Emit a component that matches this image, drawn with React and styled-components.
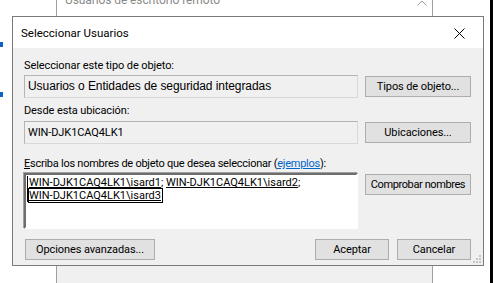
import React from 'react'
import styled, { createGlobalStyle } from 'styled-components'

const ui = `Roboto, "Liberation Sans", Arial, sans-serif`
const classic = `"Liberation Sans", Arial, sans-serif`

const Global = createGlobalStyle`
  html, body {
    margin: 0;
    padding: 0;
    background: #ffffff;
    overflow: hidden;
  }
  body {
    font-family: ${ui};
    font-size: 11px;
    letter-spacing: -0.1px;
    color: #000;
  }
`

const Desktop = styled.div`
  position: relative;
  width: 493px;
  height: 283px;
  background: #ffffff;
  overflow: hidden;
`

const EdgeMark = styled.div`
  position: absolute;
  left: 0;
  top: ${(p) => p.top}px;
  width: 3px;
  height: 5px;
  background: #0a64c8;
`

const BackWindow = styled.div`
  position: absolute;
  left: 56px;
  top: -20px;
  width: 375px;
  height: 320px;
  border-left: 1px solid #a0a0a0;
  border-right: 1px solid #a0a0a0;
  background: linear-gradient(#ffffff 0 40px, #f0f0f0 40px);
`

const BackTitle = styled.div`
  position: absolute;
  left: 8px;
  top: 13px;
  color: #8a8a8a;
  font-size: 12px;
  line-height: 15px;
`

const Chevron = styled.svg`
  position: absolute;
  right: 5px;
  top: 20px;
`

const BlackStrip = styled.div`
  position: absolute;
  right: 0;
  top: 0;
  width: 3px;
  height: 283px;
  background: #000;
`

const Dialog = styled.div`
  position: absolute;
  left: 12px;
  top: 16px;
  width: 470px;
  height: 248px;
  border: 1px solid #7a7a7a;
  background: #f0f0f0;
  display: flex;
  flex-direction: column;
`

const TitleBar = styled.div`
  height: 31px;
  background: #ffffff;
  display: flex;
  align-items: center;
  justify-content: space-between;
  padding: 1px 18px 0 8px;
  box-sizing: border-box;
  flex-shrink: 0;
`

const Title = styled.span`
  font-size: 11.5px;
  letter-spacing: 0;
  line-height: 15px;
`

const Body = styled.div`
  flex: 1;
  position: relative;
  padding: 10px 12px 0 11px;
  display: flex;
  flex-direction: column;
`

const Label = styled.div`
  line-height: 15px;
  height: 15px;
  white-space: nowrap;
  margin-top: ${(p) => p.gap || 0}px;
`

const Row = styled.div`
  display: flex;
  align-items: ${(p) => p.align || 'center'};
  justify-content: space-between;
  margin-top: ${(p) => p.gap || 0}px;
`

const Field = styled.div`
  box-sizing: border-box;
  width: 334px;
  height: 23px;
  border: 1px solid #b4b4b4;
  border-right-color: #d8d8d8;
  border-bottom-color: #d8d8d8;
  padding: 0 3px;
  line-height: 21px;
  white-space: nowrap;
  font-family: ${(p) => (p.classic ? classic : ui)};
  font-size: ${(p) => (p.classic ? '12px' : '11px')};
  letter-spacing: ${(p) => (p.classic ? '-0.07px' : '-0.1px')};
`

const NamesBox = styled.div`
  box-sizing: border-box;
  width: 334px;
  height: 56px;
  background: #ffffff;
  border-style: solid;
  border-width: 2px;
  border-color: #6d6d6d #ffffff #ffffff #6d6d6d;
  box-shadow: -1px -1px 0 #a0a0a0;
  padding: 1px 0 0 1px;
`

const Names = styled.div`
  display: inline-block;
  border-left: 1px solid #000;
  line-height: 13px;
  padding-left: 1px;
  white-space: nowrap;
  letter-spacing: 0;
`

const Name = styled.span`
  text-decoration: underline;
`

const Focused = styled.span`
  text-decoration: underline;
  outline: 1px solid #000;
  padding-right: 1px;
`

const Button = styled.button`
  box-sizing: border-box;
  width: ${(p) => p.w}px;
  height: 21px;
  border: 1px solid #adadad;
  background: #e1e1e1;
  font-family: ${ui};
  font-size: 11px;
  letter-spacing: ${(p) => p.ls || '-0.1px'};
  color: #000;
  padding: 0;
  white-space: nowrap;
  margin-right: ${(p) => p.mr || 0}px;
  margin-top: ${(p) => p.mt || 0}px;
  flex-shrink: 0;
`

const Access = styled.span`
  text-decoration: underline;
`

const Link = styled.span`
  color: #0066cc;
  text-decoration: underline;
`

const Footer = styled.div`
  display: flex;
  align-items: center;
  margin-top: 10px;
  padding-left: 1px;
`

const Spacer = styled.div`
  flex: 1;
`

const Grip = styled.svg`
  position: absolute;
  right: 2px;
  bottom: 2px;
`

function App() {
  return (
    <Desktop>
      <Global />
      <EdgeMark top={42} />
      <EdgeMark top={92} />
      <BackWindow>
        <BackTitle>Usuarios de escritorio remoto</BackTitle>
        <Chevron width="10" height="6" viewBox="0 0 10 6">
          <path d="M0.5 5.5 L5 1 L9.5 5.5" fill="none" stroke="#9a9a9a" strokeWidth="1" />
        </Chevron>
      </BackWindow>
      <BlackStrip />

      <Dialog>
        <TitleBar>
          <Title>Seleccionar Usuarios</Title>
          <svg width="11" height="11" viewBox="0 0 11 11">
            <path d="M0.5 0.5 L10.5 10.5 M10.5 0.5 L0.5 10.5" stroke="#000" strokeWidth="1" />
          </svg>
        </TitleBar>
        <Body>
          <Label>Seleccionar este tipo de objeto:</Label>
          <Row gap={2}>
            <Field classic>Usuarios o Entidades de seguridad integradas</Field>
            <Button w={106}>Tipos de objeto...</Button>
          </Row>
          <Label gap={5}>Desde esta ubicación:</Label>
          <Row gap={3}>
            <Field>WIN-DJK1CAQ4LK1</Field>
            <Button w={106}>Ubicaciones...</Button>
          </Row>
          <Label gap={12} style={{ letterSpacing: '-0.25px' }}>
            <Access>E</Access>scriba los nombres de objeto que desea seleccionar (<Link>ejemplos</Link>):
          </Label>
          <Row gap={2} align="flex-start">
            <NamesBox>
              <Names>
                <Name>WIN-DJK1CAQ4LK1\isard1</Name>; <Name>WIN-DJK1CAQ4LK1\isard2</Name>;
                <br />
                <Focused>WIN-DJK1CAQ4LK1\isard3</Focused>
              </Names>
            </NamesBox>
            <Button w={106} mt={1} ls="-0.4px">Comprobar nombres</Button>
          </Row>
          <Footer>
            <Button w={130}>Opciones avanzadas...</Button>
            <Spacer />
            <Button w={74} mr={8}>Aceptar</Button>
            <Button w={74}>Cancelar</Button>
          </Footer>
          <Grip width="8" height="8" viewBox="0 0 8 8">
            <rect x="6" y="0" width="2" height="2" fill="#c6c6c6" />
            <rect x="3" y="3" width="2" height="2" fill="#c6c6c6" />
            <rect x="6" y="3" width="2" height="2" fill="#c6c6c6" />
            <rect x="0" y="6" width="2" height="2" fill="#c6c6c6" />
            <rect x="3" y="6" width="2" height="2" fill="#c6c6c6" />
            <rect x="6" y="6" width="2" height="2" fill="#c6c6c6" />
          </Grip>
        </Body>
      </Dialog>
    </Desktop>
  )
}

export default App
